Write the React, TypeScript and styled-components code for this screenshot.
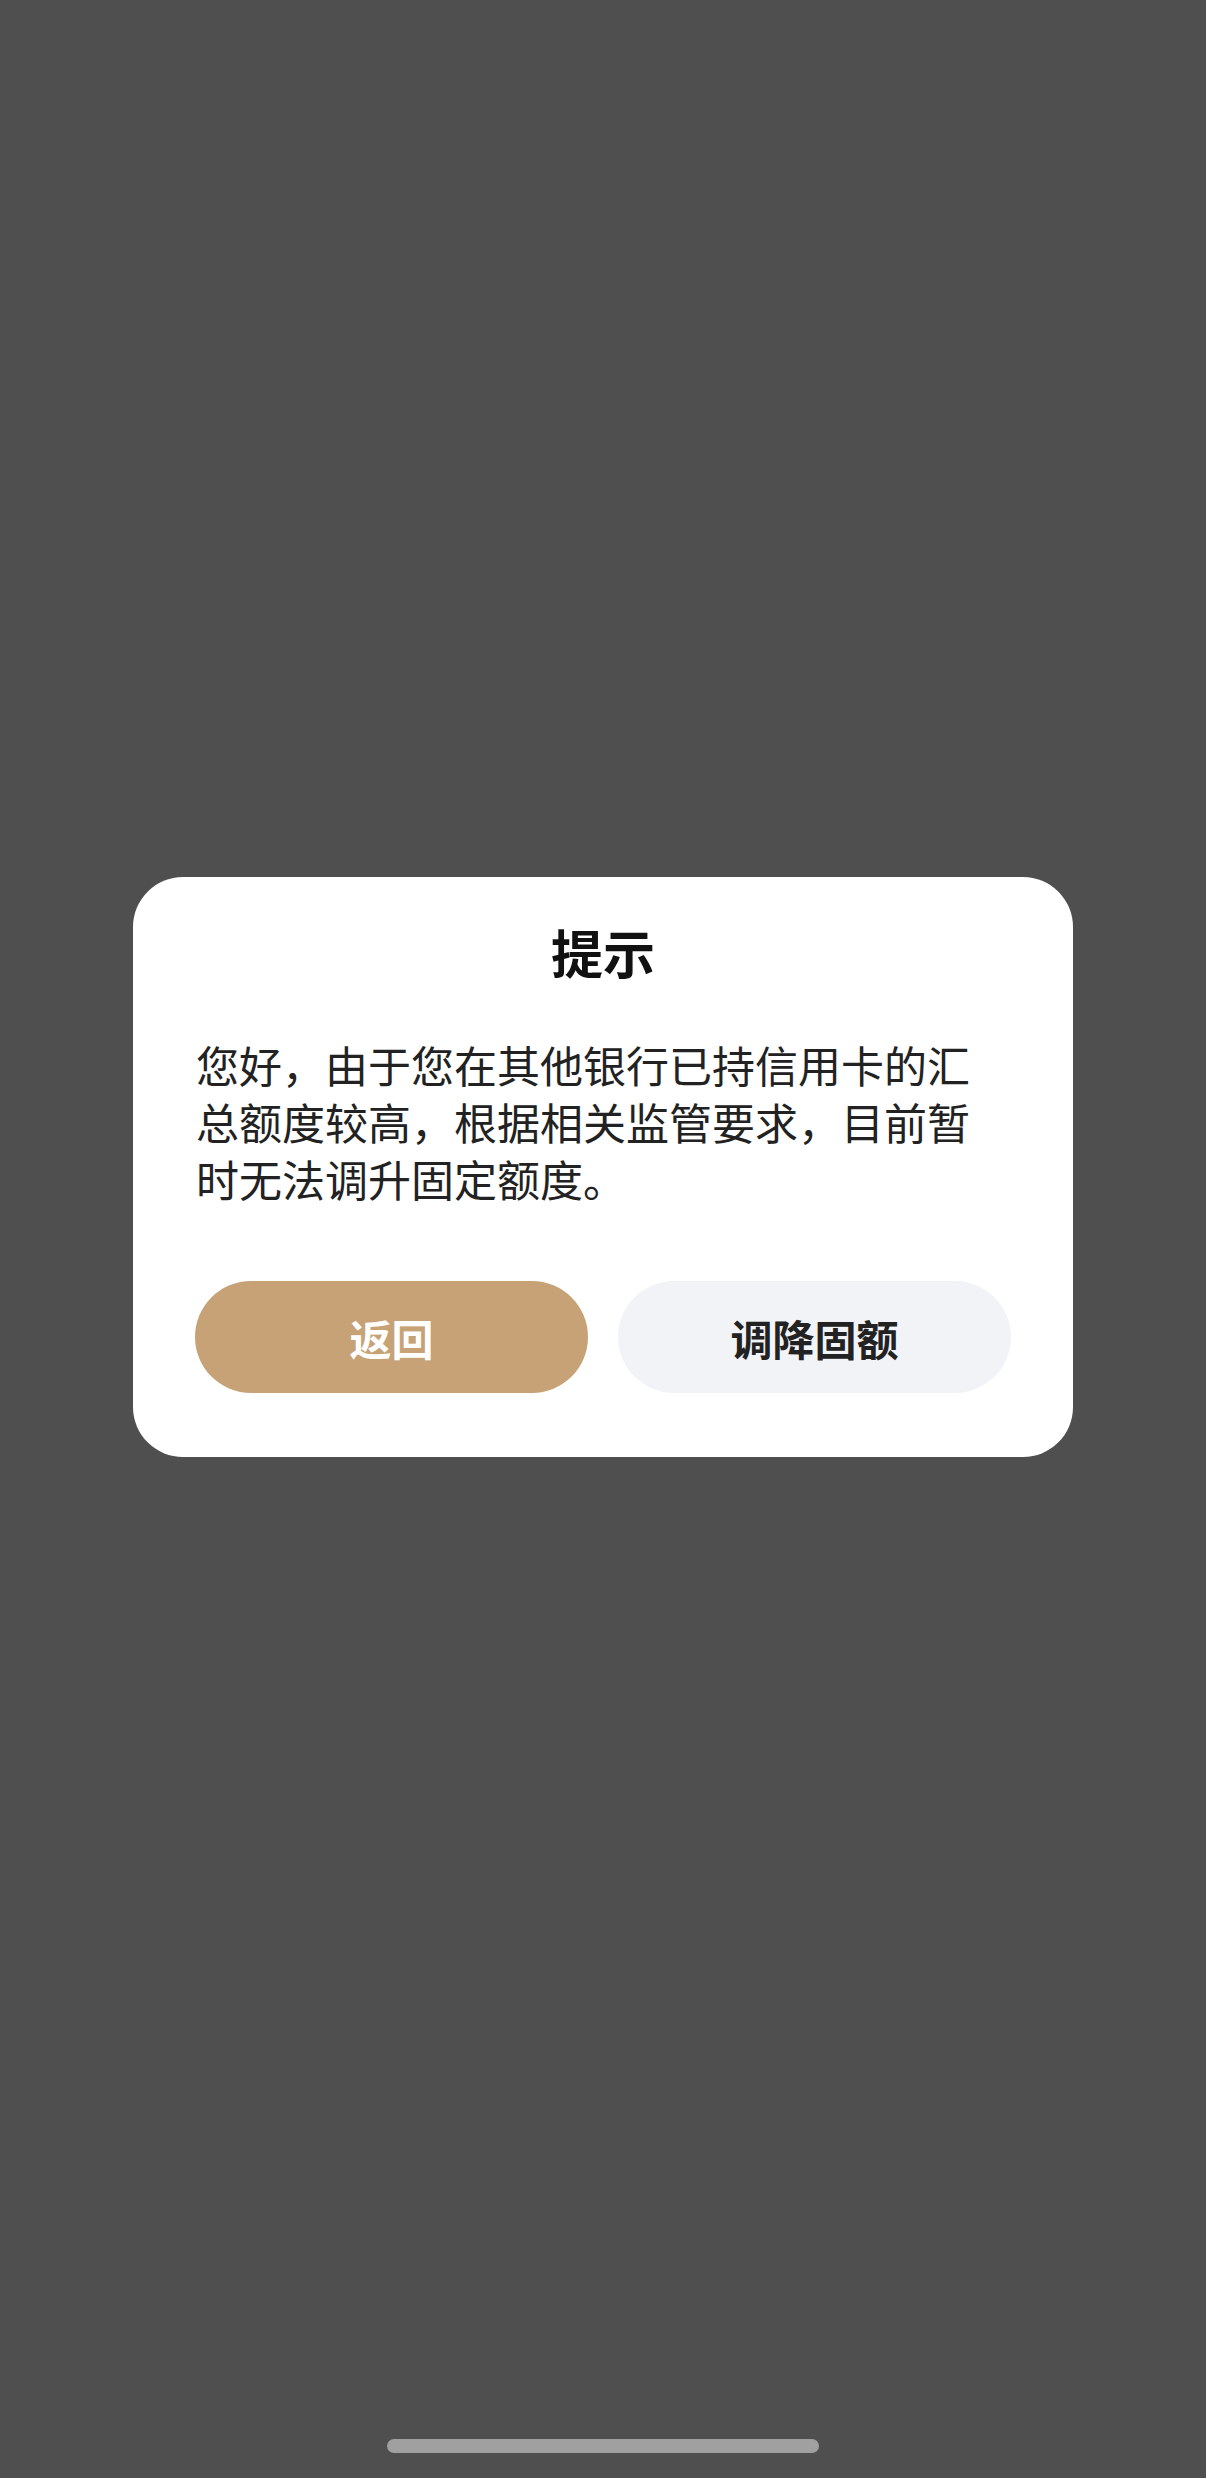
import styled, { createGlobalStyle } from "styled-components";

const GlobalStyle = createGlobalStyle`
  html, body {
    margin: 0;
    padding: 0;
    background: #4f4f4f;
  }
  * {
    box-sizing: border-box;
  }
`;

const Screen = styled.div`
  width: 1206px;
  height: 2478px;
  display: flex;
  flex-direction: column;
  align-items: center;
  padding-top: 877px;
  padding-bottom: 25px;
  background: #4f4f4f;
  font-family: "Noto Sans CJK SC", "Noto Sans", sans-serif;
`;

const Dialog = styled.div`
  width: 940px;
  background: #ffffff;
  border-radius: 50px;
  padding: 38px 62px 64px;
  display: flex;
  flex-direction: column;
`;

const Title = styled.h2`
  margin: 0;
  font-size: 52px;
  line-height: 73px;
  font-weight: 700;
  color: #111111;
  text-align: center;
`;

const Message = styled.p`
  margin: 48px 0 0;
  padding: 0 4px 0 1px;
  font-size: 43px;
  line-height: 57px;
  font-weight: 400;
  color: #222222;
`;

const Actions = styled.div`
  margin-top: 74px;
  display: grid;
  grid-template-columns: 1fr 1fr;
  gap: 30px;
`;

const ActionButton = styled.button<{ $primary?: boolean }>`
  height: 112px;
  border: none;
  border-radius: 56px;
  background: ${(p) => (p.$primary ? "#c6a276" : "#f2f3f7")};
  color: ${(p) => (p.$primary ? "#ffffff" : "#222222")};
  font-family: inherit;
  font-size: 42px;
  font-weight: 700;
  cursor: pointer;
`;

const Spacer = styled.div`
  flex: 1;
`;

const HomeIndicator = styled.div`
  width: 432px;
  height: 14px;
  border-radius: 7px;
  background: #a0a0a0;
`;

function App(): JSX.Element {
  return (
    <>
      <GlobalStyle />
      <Screen>
        <Dialog>
          <Title>提示</Title>
          <Message>
            您好，由于您在其他银行已持信用卡的汇总额度较高，根据相关监管要求，目前暂时无法调升固定额度。
          </Message>
          <Actions>
            <ActionButton $primary>返回</ActionButton>
            <ActionButton>调降固额</ActionButton>
          </Actions>
        </Dialog>
        <Spacer />
        <HomeIndicator />
      </Screen>
    </>
  );
}

export default App;
